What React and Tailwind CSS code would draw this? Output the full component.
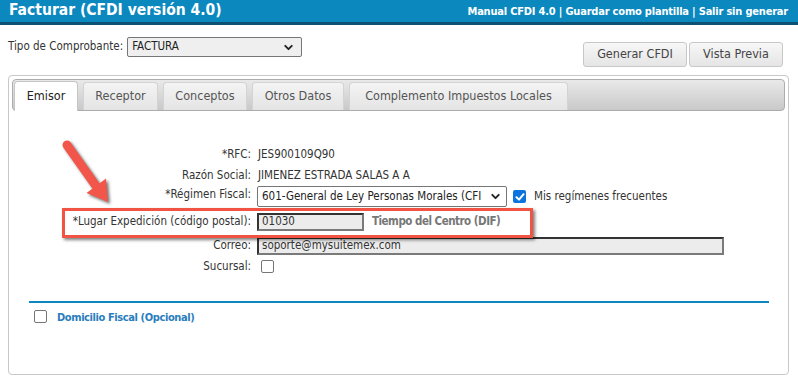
import { ChevronDown } from 'lucide-react'

const tabs = [
  { label: 'Emisor', w: 'w-[64px]', active: true },
  { label: 'Receptor', w: 'w-[75px]' },
  { label: 'Conceptos', w: 'w-[84px]' },
  { label: 'Otros Datos', w: 'w-[92px]' },
  { label: 'Complemento Impuestos Locales', w: 'w-[219px]' },
]

function Check({ checked }) {
  if (checked) {
    return (
      <span className="flex items-center justify-center w-[13px] h-[13px] rounded-[2px] bg-[#0b74de]">
        <svg width="10" height="10" viewBox="0 0 10 10" fill="none">
          <path d="M1.5 5.2L4 7.6L8.6 2.2" stroke="white" strokeWidth="2" strokeLinecap="round" strokeLinejoin="round" />
        </svg>
      </span>
    )
  }
  return <span className="block w-[13px] h-[13px] rounded-[2px] border border-[#767676] bg-white" />
}

function Row({ label, className = '', children }) {
  return (
    <div className={`flex items-center ${className}`}>
      <div className="w-[223px] text-right pr-[1px]">{label}</div>
      <div className="flex items-center pl-[5px] flex-1 min-w-0">{children}</div>
    </div>
  )
}

export default function App() {
  return (
    <div className="relative w-[798px] h-[377px] overflow-hidden bg-white font-['DejaVu_Sans_Condensed',sans-serif] text-[#333] text-[11.5px]">
      {/* Header */}
      <header className="flex items-center justify-between h-[25px] pl-[9px] pr-[10px] bg-[#0b89bf] border-b-[3px] border-[#0c5172]">
        <h1 className="text-white font-bold text-[15.5px] leading-none">Facturar (CFDI versión 4.0)</h1>
        <nav className="text-white font-bold text-[11px] leading-none tracking-[-0.2px]">
          Manual CFDI 4.0 | Guardar como plantilla | Salir sin generar
        </nav>
      </header>

      {/* Tipo de comprobante + buttons */}
      <div className="flex justify-between h-[50px] px-[8px]">
        <div className="flex items-center gap-[4px] mt-[12px] h-[20px]">
          <span>Tipo de Comprobante:</span>
          <div className="flex items-center justify-between w-[175px] h-[20px] pl-[4px] pr-[6px] bg-[#efefef] border border-[#767676] rounded-[2px] text-[#222]">
            <span>FACTURA</span>
            <ChevronDown size={13} strokeWidth={3.5} className="text-[#222]" />
          </div>
        </div>
        <div className="flex gap-[2px] mt-[17px] mr-[7px] h-[25px]">
          <button className="w-[104px] h-[25px] rounded-[3px] border border-[#c8c8c8] bg-gradient-to-b from-[#f7f7f7] to-[#e5e5e5] text-[#444] text-[12.5px]">
            Generar CFDI
          </button>
          <button className="w-[94px] h-[25px] rounded-[3px] border border-[#c8c8c8] bg-gradient-to-b from-[#f7f7f7] to-[#e5e5e5] text-[#444] text-[12.5px]">
            Vista Previa
          </button>
        </div>
      </div>

      {/* Tab box */}
      <div className="mx-[8px] w-[781px] h-[300px] border border-[#c8c8c8] rounded-[4px] p-[3px] bg-white">
        <div className="flex items-end gap-[5px] h-[32px] pl-[1px] border border-[#adadad] rounded-[4px] bg-gradient-to-b from-[#e9e9e9] to-[#c9c9c9]">
          {tabs.map((t) =>
            t.active ? (
              <div
                key={t.label}
                className={`${t.w} h-[30px] relative top-[1px] flex items-center justify-center bg-white border border-[#c5c5c5] border-b-0 rounded-t-[4px] text-[#222] text-[12.5px]`}
              >
                {t.label}
              </div>
            ) : (
              <div
                key={t.label}
                className={`${t.w} h-[28px] flex items-center justify-center bg-gradient-to-b from-[#f4f4f4] to-[#e4e4e4] border border-[#d3d3d3] border-b-0 rounded-t-[4px] text-[#555] text-[12.5px]`}
              >
                {t.label}
              </div>
            )
          )}
        </div>

        {/* Emisor form */}
        <div className="pt-[33px] pl-[17px] pr-[16px]">
          <Row label="*RFC:" className="h-[21px]">
            <span className="pl-[1px]">JES900109Q90</span>
          </Row>
          <Row label="Razón Social:" className="h-[21px]">
            <span className="pl-[1px]">JIMENEZ ESTRADA SALAS A A</span>
          </Row>
          <Row label="*Régimen Fiscal:" className="h-[22px] !items-start">
            <div className="flex items-center justify-between w-[250px] h-[21px] pl-[4px] pr-[4px] bg-white border border-[#767676] rounded-[2px] text-[#222] overflow-hidden">
              <span className="whitespace-nowrap overflow-hidden">601-General de Ley Personas Morales (CFI</span>
              <ChevronDown size={13} strokeWidth={3.5} className="shrink-0 text-[#222]" />
            </div>
            <span className="ml-[6px]"><Check checked /></span>
            <span className="ml-[8px]">Mis regímenes frecuentes</span>
          </Row>
          <Row label="*Lugar Expedición (código postal):" className="h-[28px]">
            <div className="w-[107px] h-[18px] px-[3px] flex items-center bg-[#ececec] border-2 border-t-[#333] border-l-[#333] border-r-[#7a7a7a] border-b-[#7a7a7a]">
              01030
            </div>
            <span className="ml-[8px] font-bold text-[11.5px] tracking-[-0.5px] text-[#777]">Tiempo del Centro (DIF)</span>
          </Row>
          <Row label="Correo:" className="h-[19px]">
            <div className="w-[467px] h-[18px] px-[3px] flex items-center bg-[#ececec] border-2 border-t-[#333] border-l-[#333] border-r-[#7a7a7a] border-b-[#7a7a7a]">
              soporte@mysuitemex.com
            </div>
          </Row>
          <Row label="Sucursal:" className="h-[23px]">
            <span className="pl-[4px]"><Check /></span>
          </Row>

          <div className="mt-[23px] h-[2px] bg-[#0b89bf]" />

          <div className="flex items-center gap-[10px] pl-[5px] pt-[4px]">
            <Check />
            <span className="font-bold text-[11px] tracking-[-0.4px] text-[#2a7dbd] pt-[3px]">Domicilio Fiscal (Opcional)</span>
          </div>
        </div>
      </div>

      {/* Annotation: arrow + highlight box */}
      <svg
        className="absolute left-[50px] top-[130px] drop-shadow-[2px_2px_1.5px_rgba(0,0,0,0.55)]"
        width="70"
        height="85"
        viewBox="0 0 70 85"
      >
        <line x1="17" y1="15" x2="46" y2="56" stroke="#f2564a" strokeWidth="9" strokeLinecap="round" />
        <polygon points="58,72 56,48.5 36.5,63" fill="#f2564a" />
      </svg>
      <div className="absolute left-[62px] top-[208px] w-[471px] h-[30px] border-[3px] border-[#f25443] shadow-[2px_2px_3px_rgba(0,0,0,0.5)]" />
    </div>
  )
}
